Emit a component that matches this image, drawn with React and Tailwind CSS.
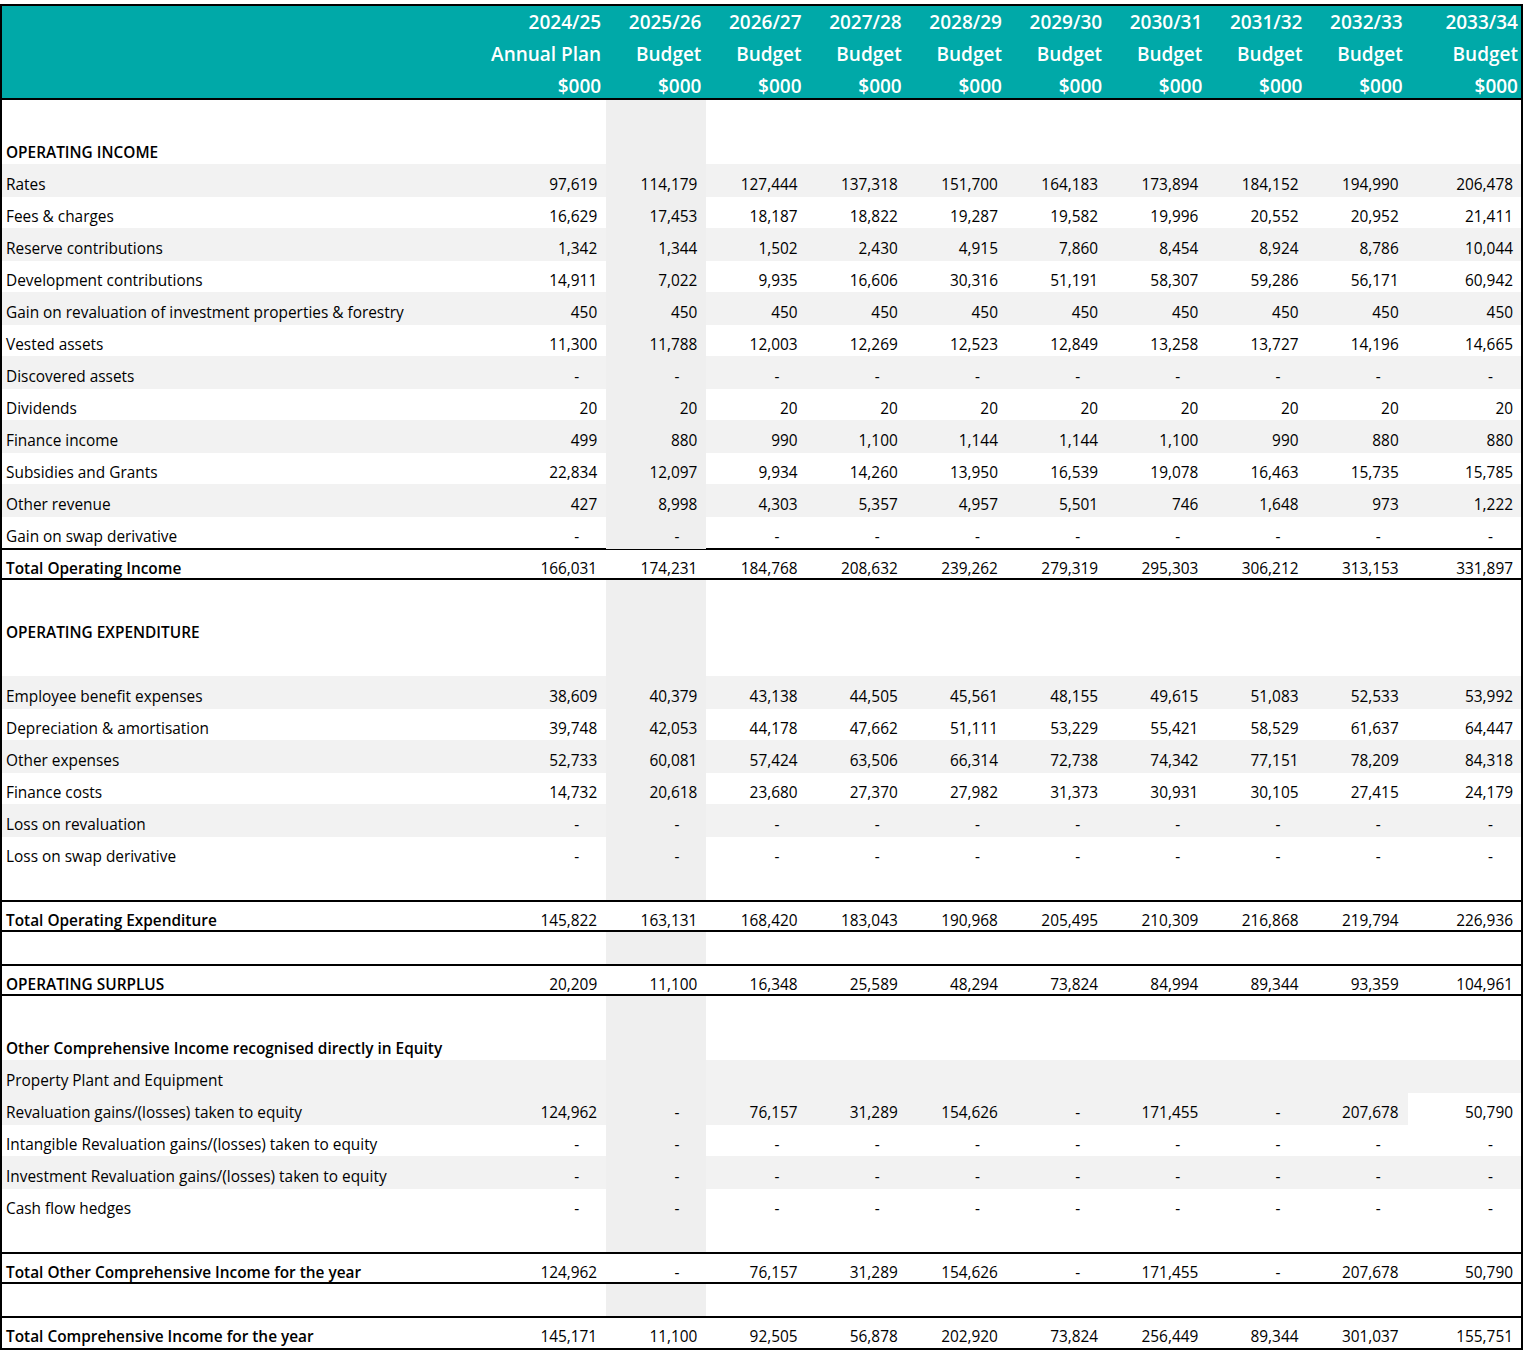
import React from "react";

const YEARS = [
  ["2024/25", "Annual Plan"],
  ["2025/26", "Budget"],
  ["2026/27", "Budget"],
  ["2027/28", "Budget"],
  ["2028/29", "Budget"],
  ["2029/30", "Budget"],
  ["2030/31", "Budget"],
  ["2031/32", "Budget"],
  ["2032/33", "Budget"],
  ["2033/34", "Budget"],
];

const dash = Array(10).fill("-");
const n = (s) => s.split(" ");

// kind: blank | section | item | total ; shade: row stripe
const ROWS = [
  { kind: "blank" },
  { kind: "section", label: "OPERATING INCOME" },
  { kind: "item", shade: true, label: "Rates", v: n("97,619 114,179 127,444 137,318 151,700 164,183 173,894 184,152 194,990 206,478") },
  { kind: "item", label: "Fees & charges", v: n("16,629 17,453 18,187 18,822 19,287 19,582 19,996 20,552 20,952 21,411") },
  { kind: "item", shade: true, label: "Reserve contributions", v: n("1,342 1,344 1,502 2,430 4,915 7,860 8,454 8,924 8,786 10,044") },
  { kind: "item", label: "Development contributions", v: n("14,911 7,022 9,935 16,606 30,316 51,191 58,307 59,286 56,171 60,942") },
  { kind: "item", shade: true, label: "Gain on revaluation of investment properties & forestry", v: Array(10).fill("450") },
  { kind: "item", label: "Vested assets", v: n("11,300 11,788 12,003 12,269 12,523 12,849 13,258 13,727 14,196 14,665") },
  { kind: "item", shade: true, label: "Discovered assets", v: dash },
  { kind: "item", label: "Dividends", v: Array(10).fill("20") },
  { kind: "item", shade: true, label: "Finance income", v: n("499 880 990 1,100 1,144 1,144 1,100 990 880 880") },
  { kind: "item", label: "Subsidies and Grants", v: n("22,834 12,097 9,934 14,260 13,950 16,539 19,078 16,463 15,735 15,785") },
  { kind: "item", shade: true, label: "Other revenue", v: n("427 8,998 4,303 5,357 4,957 5,501 746 1,648 973 1,222") },
  { kind: "item", label: "Gain on swap derivative", v: dash },
  { kind: "total", label: "Total Operating Income", v: n("166,031 174,231 184,768 208,632 239,262 279,319 295,303 306,212 313,153 331,897") },
  { kind: "blank" },
  { kind: "section", label: "OPERATING EXPENDITURE" },
  { kind: "blank" },
  { kind: "item", shade: true, label: "Employee benefit expenses", v: n("38,609 40,379 43,138 44,505 45,561 48,155 49,615 51,083 52,533 53,992") },
  { kind: "item", label: "Depreciation & amortisation", v: n("39,748 42,053 44,178 47,662 51,111 53,229 55,421 58,529 61,637 64,447") },
  { kind: "item", shade: true, label: "Other expenses", v: n("52,733 60,081 57,424 63,506 66,314 72,738 74,342 77,151 78,209 84,318") },
  { kind: "item", label: "Finance costs", v: n("14,732 20,618 23,680 27,370 27,982 31,373 30,931 30,105 27,415 24,179") },
  { kind: "item", shade: true, label: "Loss on revaluation", v: dash },
  { kind: "item", label: "Loss on swap derivative", v: dash },
  { kind: "blank" },
  { kind: "total", label: "Total Operating Expenditure", v: n("145,822 163,131 168,420 183,043 190,968 205,495 210,309 216,868 219,794 226,936") },
  { kind: "blank" },
  { kind: "total", label: "OPERATING SURPLUS", v: n("20,209 11,100 16,348 25,589 48,294 73,824 84,994 89,344 93,359 104,961") },
  { kind: "blank" },
  { kind: "section", label: "Other Comprehensive Income recognised directly in Equity" },
  { kind: "item", shade: true, label: "Property Plant and Equipment", v: Array(10).fill("") },
  { kind: "item", shade: true, shadeLast: false, label: "Revaluation gains/(losses) taken to equity", v: n("124,962 - 76,157 31,289 154,626 - 171,455 - 207,678 50,790") },
  { kind: "item", label: "Intangible Revaluation gains/(losses) taken to equity", v: dash },
  { kind: "item", shade: true, label: "Investment Revaluation gains/(losses) taken to equity", v: dash },
  { kind: "item", label: "Cash flow hedges", v: dash },
  { kind: "blank" },
  { kind: "total", label: "Total Other Comprehensive Income for the year", v: n("124,962 - 76,157 31,289 154,626 - 171,455 - 207,678 50,790") },
  { kind: "blank" },
  { kind: "total", last: true, label: "Total Comprehensive Income for the year", v: n("145,171 11,100 92,505 56,878 202,920 73,824 256,449 89,344 301,037 155,751") },
];

const GRID = "grid grid-cols-[504px_repeat(9,100.2px)_1fr]";

function Cell({ value, index, rowShade, isTotal, shadeLast }) {
  const highlight = index === 1 && !isTotal;
  let bg = "";
  if (highlight) bg = "bg-[#efefef]";
  else if (rowShade && !(index === 9 && shadeLast === false)) bg = "bg-[#f2f2f2]";
  const isDash = value === "-";
  return (
    <div
      className={`flex items-center justify-end leading-6 ${isTotal ? "pt-[7px]" : "pt-[9px]"} ${bg} ${
        isDash ? (index === 9 ? "pr-[28px]" : "pr-[27px]") : index === 9 ? "pr-[8px]" : "pr-[9px]"
      }`}
    >
      {value}
    </div>
  );
}

function Row({ row }) {
  const isTotal = row.kind === "total";
  const values = row.v || Array(10).fill("");
  const border = isTotal
    ? row.last
      ? "border-t-2 border-black"
      : "border-y-2 border-black"
    : "";
  const labelBg = row.shade ? "bg-[#f2f2f2]" : "";
  return (
    <div className={`${GRID} h-8 ${border}`}>
      <div
        className={`flex items-center leading-6 pl-1 whitespace-nowrap ${isTotal ? "pt-[7px]" : "pt-[9px]"} ${labelBg} ${
          isTotal || row.kind === "section" ? "font-semibold" : ""
        }`}
      >
        {row.label}
      </div>
      {values.map((val, i) => (
        <Cell
          key={i}
          value={val}
          index={i}
          rowShade={row.shade}
          isTotal={isTotal}
          shadeLast={row.shadeLast}
        />
      ))}
    </div>
  );
}

export default function App() {
  return (
    <div className="w-[1523px] pt-1 bg-white font-['Open_Sans',sans-serif] text-[15.4px] text-black">
      <div className="border-2 border-black">
        {/* Header */}
        <div className={`${GRID} h-[94px] bg-[#00a9a8] border-b-2 border-black text-white font-semibold text-[19px]`}>
          <div />
          {YEARS.map(([yr, kind], i) => (
            <div
              key={yr}
              className={`flex flex-col items-end whitespace-nowrap ${i === 9 ? "pr-[3px]" : "pr-[5px]"}`}
            >
              <div className="h-8 shrink-0 flex items-center">{yr}</div>
              <div className="h-8 shrink-0 flex items-center">{kind}</div>
              <div className="h-8 shrink-0 flex items-center">$000</div>
            </div>
          ))}
        </div>

        {/* Body */}
        {ROWS.map((row, idx) => (
          <Row key={idx} row={row} />
        ))}
      </div>
    </div>
  );
}
